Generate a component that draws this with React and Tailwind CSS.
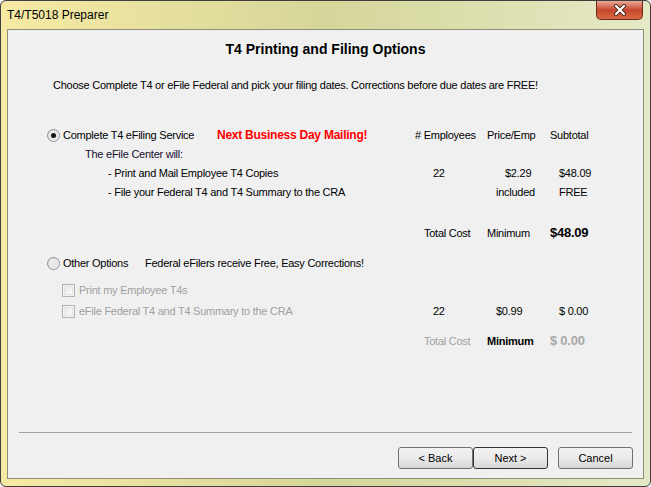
import React from "react";

function Radio({ checked }) {
  return (
    <span className="w-[13px] h-[13px] shrink-0 rounded-full border border-[#8e8f8f] bg-gradient-to-br from-[#d6d6d6] to-[#fafafa] flex items-center justify-center">
      <span className="w-[9px] h-[9px] rounded-full bg-gradient-to-br from-[#f0f0f0] to-[#e2e2e2] flex items-center justify-center">
        {checked && <span className="w-[5px] h-[5px] rounded-full bg-[#151515]" />}
      </span>
    </span>
  );
}

function Checkbox() {
  return (
    <span className="w-[13px] h-[13px] shrink-0 border border-[#b1b1b1] bg-[#f4f4f4] p-[1px]">
      <span className="block w-full h-full border border-[#e3e3e3] bg-gradient-to-br from-[#e8e8e8] to-[#fbfbfb]" />
    </span>
  );
}

function Button({ children, focused }) {
  return (
    <button
      className={`w-[75px] h-[22px] rounded-[3px] border text-[11px] text-black bg-gradient-to-b from-[#f2f2f2] via-[#ebebeb] to-[#d6d6d6] ${
        focused ? "border-[#333333]" : "border-[#707070]"
      }`}
    >
      {children}
    </button>
  );
}

function CloseButton() {
  return (
    <div className="w-[47px] h-[19px] rounded-b-[5px] border border-t-0 border-[#6a2a1c] bg-gradient-to-b from-[#e9a994] via-[#c8452c] to-[#d66a43] flex items-center justify-center">
      <svg width="14" height="12" viewBox="0 0 14 12">
        <path d="M3 2 L11 10 M11 2 L3 10" stroke="#4a2a20" strokeWidth="4" strokeLinecap="round" />
        <path d="M3 2 L11 10 M11 2 L3 10" stroke="#ffffff" strokeWidth="2.2" strokeLinecap="round" />
      </svg>
    </div>
  );
}

export default function App() {
  return (
    <div className="w-[651px] h-[487px] bg-[#f0f0f0] font-['Liberation_Sans',Arial,sans-serif] text-[11px] text-black">
      <div className="w-full h-full flex flex-col rounded-[6px] border border-[#3f3f3f] bg-gradient-to-r from-[#f7eaa4] via-[#d5d699] to-[#e6e9c6] overflow-hidden">
        {/* Title bar */}
        <div className="h-[28px] flex items-start justify-between pl-[6px] pr-[7px]">
          <span className="mt-[7px] text-[12px] leading-[14px]">T4/T5018 Preparer</span>
          <CloseButton />
        </div>

        {/* Client area */}
        <div className="flex-1 mx-[6px] mb-[7px] border border-[#8f8f78] bg-[#f0f0f0] flex flex-col tracking-[-0.25px]">
          <div className="mt-[9px] h-[20px] flex items-center justify-center text-[14px] font-bold tracking-normal">
            T4 Printing and Filing Options
          </div>
          <div className="mt-[16px] h-[20px] flex items-center pl-[45px]">
            Choose Complete T4 or eFile Federal and pick your filing dates. Corrections before due dates are FREE!
          </div>

          {/* Complete service */}
          <div className="mt-[30px] h-[20px] flex items-center">
            <div className="w-[407px] flex items-center pl-[39px]">
              <Radio checked />
              <span className="ml-[3px] w-[154px]">Complete T4 eFiling Service</span>
              <span className="text-[12px] font-bold text-[#ff0000]">Next Business Day Mailing!</span>
            </div>
            <div className="w-[70px]"># Employees</div>
            <div className="w-[62px] pl-[2px]">Price/Emp</div>
            <div className="pl-[3px]">Subtotal</div>
          </div>
          <div className="h-[19px] flex items-center pl-[77px] text-[#150f2e]">The eFile Center will:</div>
          <div className="h-[19px] flex items-center">
            <div className="w-[407px] pl-[100px]">- Print and Mail Employee T4 Copies</div>
            <div className="w-[70px] pl-[18px]">22</div>
            <div className="w-[62px] pl-[20px]">$2.29</div>
            <div className="pl-[12px]">$48.09</div>
          </div>
          <div className="h-[19px] flex items-center">
            <div className="w-[407px] pl-[100px]">- File your Federal T4 and T4 Summary to the CRA</div>
            <div className="w-[70px]" />
            <div className="w-[62px] pl-[11px]">included</div>
            <div className="pl-[12px]">FREE</div>
          </div>
          <div className="mt-[21px] h-[20px] flex items-center">
            <div className="w-[407px]" />
            <div className="w-[70px] pl-[9px]">Total Cost</div>
            <div className="w-[62px] pl-[2px]">Minimum</div>
            <div className="pl-[3px] text-[13px] font-bold">$48.09</div>
          </div>

          {/* Other options */}
          <div className="mt-[10px] h-[20px] flex items-center pl-[39px]">
            <Radio />
            <span className="ml-[3px] w-[82px]">Other Options</span>
            <span>Federal eFilers receive Free, Easy Corrections!</span>
          </div>
          <div className="mt-[7px] h-[20px] flex items-center pl-[54px]">
            <Checkbox />
            <span className="ml-[4px] text-[#a0a0a0]">Print my Employee T4s</span>
          </div>
          <div className="mt-[1px] h-[20px] flex items-center">
            <div className="w-[407px] flex items-center pl-[54px]">
              <Checkbox />
              <span className="ml-[4px] text-[#a0a0a0]">eFile Federal T4 and T4 Summary to the CRA</span>
            </div>
            <div className="w-[70px] pl-[18px]">22</div>
            <div className="w-[62px] pl-[11px]">$0.99</div>
            <div className="pl-[12px]">$ 0.00</div>
          </div>
          <div className="mt-[10px] h-[20px] flex items-center">
            <div className="w-[407px]" />
            <div className="w-[70px] pl-[9px] text-[#a0a0a0]">Total Cost</div>
            <div className="w-[62px] pl-[2px] font-bold">Minimum</div>
            <div className="pl-[3px] text-[13px] font-bold text-[#a8a8a8]">$ 0.00</div>
          </div>

          <div className="flex-1" />
          <div className="mx-[11px] h-px bg-[#a0a0a0]" />
          <div className="mt-[14px] mb-[9px] pr-[10px] flex justify-end tracking-normal">
            <Button>&lt; Back</Button>
            <Button focused>Next &gt;</Button>
            <div className="ml-[10px]">
              <Button>Cancel</Button>
            </div>
          </div>
        </div>
      </div>
    </div>
  );
}
